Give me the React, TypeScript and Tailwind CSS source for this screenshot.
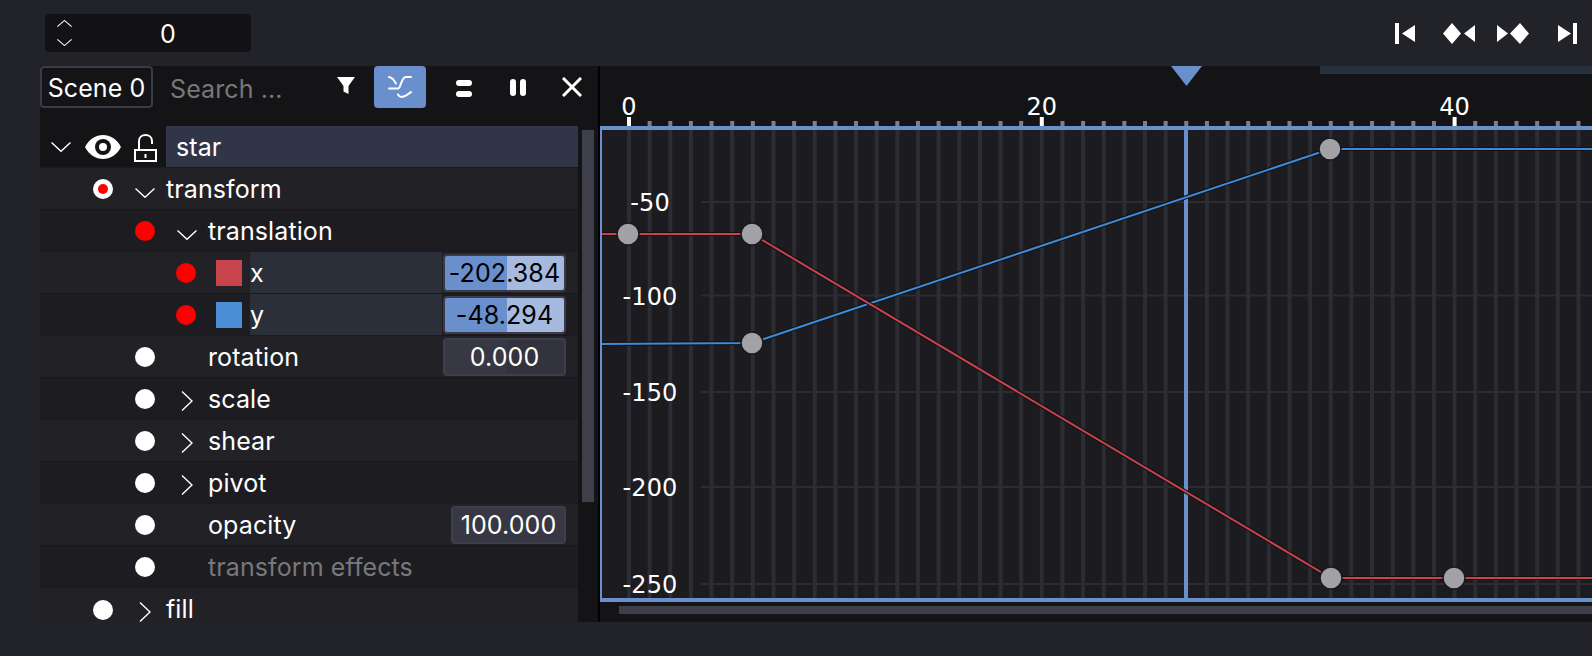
import type { ReactNode } from "react";

const ticks = Array.from({ length: 47 }, (_, i) => i);
const xOf = (f: number) => 29 + f * 20.64;
const yLabels = [
  { label: "-50", y: 136 },
  { label: "-100", y: 229.5 },
  { label: "-150", y: 326 },
  { label: "-200", y: 421 },
  { label: "-250", y: 518 },
];
// chart coordinates, origin is the top left corner of the chart pane
const redCurve = "0,168 152,168 731,512 1000,512";
const blueCurve = "0,278 152,277 730,83 1000,83";
const keys = [[28, 168], [152, 168], [731, 512], [854, 512], [152, 277], [730, 83]];

function Dot({ on, inner }: { on?: boolean; inner?: boolean }) {
  return (
    <span className={`flex h-5 w-5 shrink-0 items-center justify-center rounded-full ${on ? "bg-[#ff0000]" : "bg-white"}`}>
      {inner && <span className="h-2.5 w-2.5 rounded-full bg-[#ff0000]" />}
    </span>
  );
}

function ChevronDownIcon({ width = 20, height = 10 }: { width?: number; height?: number }) {
  return (
    <svg width={width} height={height} viewBox="0 0 20 10" fill="none" stroke="white" strokeWidth="1.4" preserveAspectRatio="none">
      <path d="M0.500 0.500 10 9.300 19.500 0.500" />
    </svg>
  );
}

function Chevron({ open }: { open?: boolean }) {
  return (
    <span className="ml-5 mr-[9px] flex h-6 w-6 shrink-0 items-center justify-center">
      {open === true && <span className="mt-2"><ChevronDownIcon /></span>}
      {open === false && (
        <svg width="12" height="20" viewBox="0 0 12 20" fill="none" stroke="white" strokeWidth="1.4" className="mt-1">
          <path d="M1 0.500 11 10 1 19.500" />
        </svg>
      )}
    </span>
  );
}

function Row({ pad, bg, children }: { pad: string; bg: string; children: ReactNode }) {
  return (
    <div className={`flex h-[42px] items-center border-b border-[#1a1a1e] pr-3 ${pad} ${bg}`}>{children}</div>
  );
}

function Label({ children, muted }: { children: ReactNode; muted?: boolean }) {
  return <span className={`mt-0.5 flex-1 ${muted ? "text-[#77777d]" : "text-white"}`}>{children}</span>;
}

function Value({ text, active, fill }: { text: string; active?: boolean; fill?: boolean }) {
  if (active) {
    return (
      <div className="flex h-[38px] w-[123px] shrink-0 items-center justify-center rounded border-2 border-[#3a3b46] bg-[linear-gradient(90deg,#6a8fcd_0,#6a8fcd_62px,#a6badf_62px)] text-black">
        <span className="mt-0.5">{text}</span>
      </div>
    );
  }
  return (
    <div className={`flex h-[38px] shrink-0 items-center justify-center rounded border-2 border-[#3e3f4b] text-white ${fill ? "w-[115px] bg-[#373843]" : "w-[123px] bg-[linear-gradient(90deg,#373843_0,#373843_62px,#32333c_62px)]"}`}>
      <span className="mt-0.5">{text}</span>
    </div>
  );
}

function AnimatedRow({ label, swatch, text, bg }: { label: string; swatch: string; text: string; bg: string }) {
  return (
    <Row pad="pl-[136px]" bg={bg}>
      <Dot on />
      <span className={`ml-5 h-[26px] w-[26px] shrink-0 ${swatch}`} />
      <div className="ml-2 flex h-full flex-1 items-center bg-[#2b2f3a]">
        <Label>{label}</Label>
      </div>
      <div className="ml-px"><Value text={text} active /></div>
    </Row>
  );
}

function Chart() {
  return (
    <svg width="992" height="556" viewBox="0 0 992 556" className="block" fontFamily="'DejaVu Sans', sans-serif" fill="white">
      <rect x="0" y="0" width="992" height="60" fill="#141416" />
      <rect x="720" y="0" width="272" height="8" fill="#26303f" />
      <rect x="0" y="64" width="992" height="468" fill="#1b1b20" />
      {ticks.map((i) => (
        <rect key={i} x={xOf(i) - 2} y="64" width="4" height="468" fill="#2c2d32" />
      ))}
      {yLabels.map((l) => (
        <rect key={l.label} x="101" y={l.y - 1} width="891" height="2" fill="#2c2d32" />
      ))}
      {ticks.map((i) =>
        i % 20 === 0 ? (
          <rect key={i} x={xOf(i) - 2} y="51" width="4" height="9" fill="white" />
        ) : (
          <rect key={i} x={xOf(i) - 2} y="55" width="4" height="5" fill="#808080" />
        ),
      )}
      {[0, 20, 40].map((n) => (
        <text key={n} x={xOf(n)} y="49" fontSize="24" textAnchor="middle">{n}</text>
      ))}
      {yLabels.map((l) => (
        <text key={l.label} x="50" y={l.y + 9} fontSize="24" textAnchor="middle">{l.label}</text>
      ))}
      <path d="M584 64h4v468h-4z" fill="#6a8fcd" />
      <path d="M571 0h31l-15.500 20z" fill="#6a8fcd" />
      <polyline points={blueCurve} fill="none" stroke="#111114" strokeWidth="4" />
      <polyline points={blueCurve} fill="none" stroke="#3f8ad6" strokeWidth="2" />
      <polyline points={redCurve} fill="none" stroke="#111114" strokeWidth="4" />
      <polyline points={redCurve} fill="none" stroke="#c8434b" strokeWidth="2" />
      {keys.map(([x, y]) => (
        <circle key={`${x}-${y}`} cx={x} cy={y} r="11" fill="#a2a1a5" stroke="#19191d" strokeWidth="1.500" />
      ))}
      <path d="M0 60h992v4H0zM0 532h992v4H0zM0 60h2v476H0z" fill="#6a8fcd" />
      <rect x="0" y="536" width="992" height="20" fill="#141416" />
      <rect x="19" y="540" width="973" height="8" fill="#3f3f4b" />
    </svg>
  );
}

export default function App() {
  return (
    <main className="flex h-[656px] w-[1592px] flex-col overflow-hidden bg-[#222229] font-['Inter','Noto_Sans',sans-serif] text-[25px] leading-none tracking-[0.1px] text-white">
      <header className="flex h-[66px] items-center justify-between pr-[15px]">
        <div className="ml-[45px] flex h-[38px] w-[206px] items-center rounded bg-[#121214]">
          <div className="ml-[12px] flex w-[15px] flex-col items-center gap-3">
            <span className="rotate-180 leading-none"><ChevronDownIcon width={15} height={7} /></span>
            <ChevronDownIcon width={15} height={7} />
          </div>
          <span className="ml-[88px] mt-0.5">0</span>
        </div>
        <div className="flex items-center">
          <svg width="20" height="21" viewBox="0 0 20 21" fill="white">
            <path d="M0 0h4v21H0zM7 10.500 20 2v17z" />
          </svg>
          <svg width="32" height="21" viewBox="0 0 32 21" fill="white" className="ml-7">
            <path d="M9 0 18 10.500 9 21 0 10.500zM21 10.500 32 2v17z" />
          </svg>
          <svg width="32" height="21" viewBox="0 0 32 21" fill="white" className="ml-[22px]">
            <path d="M0 2 11 10.500 0 19zM23 0 32 10.500 23 21 13 10.500z" />
          </svg>
          <svg width="19" height="21" viewBox="0 0 19 21" fill="white" className="ml-[29px]">
            <path d="M0 2 13 10.500 0 19zM15 0h4v21h-4z" />
          </svg>
        </div>
      </header>

      <div className="ml-10 flex h-[556px]">
        <section className="flex w-[560px] shrink-0 flex-col border-r-2 border-black bg-[#141416]">
          <div className="flex h-[60px] shrink-0 items-start">
            <div className="flex h-[42px] w-[113px] items-center justify-center rounded border-2 border-[#3a3b46]">
              <span className="mt-0.5">Scene 0</span>
            </div>
            <span className="ml-[17px] mt-[11px] w-[120px] text-[#777779]">Search ...</span>
            <svg width="18" height="18" viewBox="0 0 18 18" fill="white" className="ml-[47px] mt-[11px]">
              <path d="M0 0h18L11.500 9v8L6.500 14.500V9z" />
            </svg>
            <div className="ml-[19px] flex h-[42px] w-[52px] items-center justify-center rounded bg-[#6a8fcd]">
              <svg width="24" height="24" viewBox="0 0 24 24" fill="none" stroke="white" strokeWidth="2" strokeLinecap="round">
                <path d="M1 13.500H10C13 13.500 13 2 18 2H23M1 2C4 2.500 6 5 8 8.500" />
                <path d="M10 19.500C12 23.500 16 22.500 23 17" />
              </svg>
            </div>
            <div className="ml-[30px] mt-[14px] flex h-[17px] w-4 flex-col justify-between">
              <span className="h-[6px] rounded-sm bg-white" />
              <span className="h-[6px] rounded-sm bg-white" />
            </div>
            <div className="ml-[38px] mt-[13px] flex h-[17px] w-4 justify-between">
              <span className="w-[6px] rounded-sm bg-white" />
              <span className="w-[6px] rounded-sm bg-white" />
            </div>
            <svg width="20" height="20" viewBox="0 0 20 20" stroke="white" strokeWidth="3" className="ml-[36px] mt-[11px]">
              <path d="M1 1 19 19M19 1 1 19" />
            </svg>
          </div>

          <div className="flex min-h-0 flex-1">
            <div className="w-[538px] shrink-0">
              <div className="flex h-[42px] items-center border-b border-[#1a1a1e]">
                <span className="ml-[11px] flex"><ChevronDownIcon /></span>
                <svg width="36" height="24" viewBox="0 0 36 24" className="ml-[14px]">
                  <path d="M0 12C4 4 11 0 18 0C25 0 32 4 36 12C32 20 25 24 18 24C11 24 4 20 0 12Z" fill="white" />
                  <circle cx="18" cy="12" r="8" fill="#141416" />
                  <circle cx="18" cy="12" r="4" fill="white" />
                </svg>
                <svg width="23" height="28" viewBox="0 0 23 28" fill="none" stroke="white" strokeWidth="2" className="ml-[13px] mt-0.5">
                  <rect x="1" y="16" width="21" height="11" />
                  <path d="M5 16V7C5 -1 18 -1 18 7V10" />
                  <path d="M11.500 20v4" />
                </svg>
                <div className="ml-[9px] flex h-full flex-1 items-center bg-[#303648] pl-[10px]">
                  <Label>star</Label>
                </div>
              </div>
              <Row pad="pl-[53px]" bg="bg-[#212126]">
                <Dot inner />
                <Chevron open />
                <Label>transform</Label>
              </Row>
              <Row pad="pl-[95px]" bg="bg-[#1d1d21]">
                <Dot on />
                <Chevron open />
                <Label>translation</Label>
              </Row>
              <AnimatedRow label="x" swatch="bg-[#c7444c]" text="-202.384" bg="bg-[#212126]" />
              <AnimatedRow label="y" swatch="bg-[#4a8fd6]" text="-48.294" bg="bg-[#1d1d21]" />
              <Row pad="pl-[95px]" bg="bg-[#212126]">
                <Dot />
                <Chevron />
                <Label>rotation</Label>
                <Value text="0.000" />
              </Row>
              <Row pad="pl-[95px]" bg="bg-[#1d1d21]">
                <Dot />
                <Chevron open={false} />
                <Label>scale</Label>
              </Row>
              <Row pad="pl-[95px]" bg="bg-[#212126]">
                <Dot />
                <Chevron open={false} />
                <Label>shear</Label>
              </Row>
              <Row pad="pl-[95px]" bg="bg-[#1d1d21]">
                <Dot />
                <Chevron open={false} />
                <Label>pivot</Label>
              </Row>
              <Row pad="pl-[95px]" bg="bg-[#212126]">
                <Dot />
                <Chevron />
                <Label>opacity</Label>
                <Value text="100.000" fill />
              </Row>
              <Row pad="pl-[95px]" bg="bg-[#1d1d21]">
                <Dot />
                <Chevron />
                <Label muted>transform effects</Label>
              </Row>
              <div className="h-[34px] bg-[#212126] pl-[53px] pt-[9px]">
                <div className="flex h-[25px] items-center">
                  <Dot />
                  <Chevron open={false} />
                  <span>fill</span>
                </div>
              </div>
            </div>
            <div className="flex-1 pl-1 pt-1">
              <div className="h-[372px] w-3 bg-[#3f3f4b]" />
            </div>
          </div>
        </section>
        <Chart />
      </div>
    </main>
  );
}
